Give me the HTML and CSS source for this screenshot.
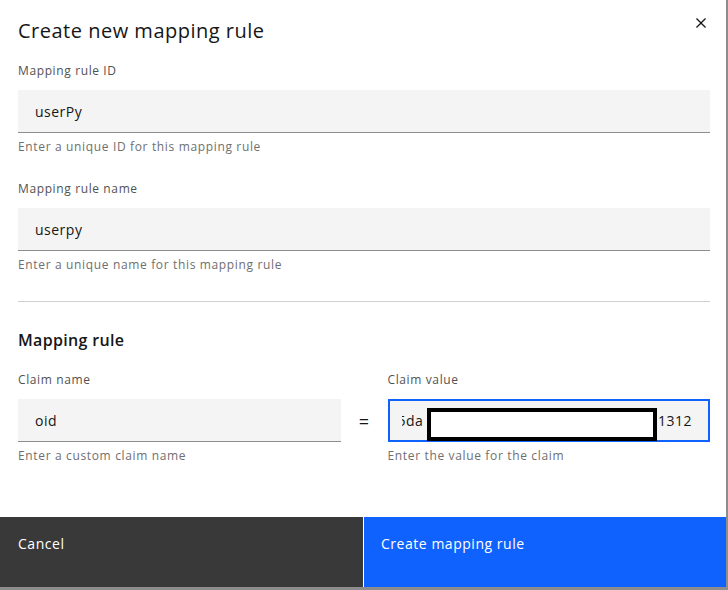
FILE: index.html
```html
<!DOCTYPE html>
<html lang="en">
<head>
<meta charset="utf-8">
<title>Create new mapping rule</title>
<link rel="stylesheet" href="styles.css">
</head>
<body>
<div class="modal">
  <div class="modal-body">
    <div class="header">
      <h2 class="title">Create new mapping rule</h2>
      <button class="close" aria-label="Close">
        <svg width="20" height="20" viewBox="0 0 20 20"><path d="M15 5.9L14.1 5 10 9.1 5.9 5 5 5.9 9.1 10 5 14.1 5.9 15 10 10.9 14.1 15 15 14.1 10.9 10z" fill="#161616"/></svg>
      </button>
    </div>

    <div class="field first">
      <label class="label">Mapping rule ID</label>
      <div class="input"><span>userPy</span></div>
      <div class="helper">Enter a unique ID for this mapping rule</div>
    </div>

    <div class="field second">
      <label class="label">Mapping rule name</label>
      <div class="input"><span>userpy</span></div>
      <div class="helper">Enter a unique name for this mapping rule</div>
    </div>

    <hr class="divider">

    <h3 class="section-title">Mapping rule</h3>

    <div class="claim-row">
      <div class="field">
        <label class="label">Claim name</label>
        <div class="input"><span>oid</span></div>
        <div class="helper">Enter a custom claim name</div>
      </div>
      <div class="equals">=</div>
      <div class="field">
        <label class="label">Claim value</label>
        <div class="input focused">
          <div class="value-clip"><span class="value-start">5da</span></div>
          <span class="value-end">1312</span>
          <div class="redact"></div>
        </div>
        <div class="helper">Enter the value for the claim</div>
      </div>
    </div>
  </div>

  <div class="footer">
    <button class="btn secondary">Cancel</button>
    <button class="btn primary">Create mapping rule</button>
  </div>
</div>
</body>
</html>
```

FILE: styles.css
```css
* { box-sizing: border-box; }

body {
  margin: 0;
  background: #8d8d8d;
  font-family: "Open Sans", "Noto Sans", Arial, sans-serif;
  color: #161616;
}

.modal {
  width: 726px;
  height: 587px;
  background: #ffffff;
  display: flex;
  flex-direction: column;
}

.modal-body {
  flex: 1;
  padding: 17px 16px 0 18px;
}

.header {
  display: flex;
  justify-content: space-between;
  align-items: flex-start;
}

.title {
  margin: 0;
  font-size: 20px;
  font-weight: 400;
  line-height: 28px;
  letter-spacing: 0.5px;
  color: #161616;
}

.close {
  border: 0;
  background: none;
  padding: 0;
  margin: -4px -1px 0 0;
  width: 20px;
  height: 20px;
  cursor: pointer;
}
.close svg { display: block; }

.field.first { margin-top: 18px; }
.field.second { margin-top: 26px; }

.label {
  display: block;
  font-size: 12px;
  line-height: 16px;
  letter-spacing: 0.62px;
  color: #525252;
  margin-bottom: 11px;
}

.input {
  position: relative;
  height: 43px;
  background: #f4f4f4;
  border-bottom: 1px solid #8d8d8d;
  display: flex;
  align-items: center;
  padding: 2px 16px 0 17px;
  font-size: 14px;
  line-height: 18px;
  letter-spacing: 0.5px;
  color: #161616;
}

.helper {
  margin-top: 6px;
  font-size: 12px;
  line-height: 16px;
  letter-spacing: 0.65px;
  color: #6f6f6f;
}

.divider {
  margin: 28px 0 0 0;
  border: 0;
  border-top: 1px solid #d1d1d1;
  height: 0;
}

.section-title {
  margin: 27px 0 0 0;
  font-size: 16px;
  font-weight: 600;
  line-height: 22px;
  letter-spacing: 0.33px;
  color: #161616;
}

.claim-row {
  margin-top: 21px;
  display: grid;
  grid-template-columns: 1fr 47px 1fr;
}

.equals {
  align-self: start;
  margin-top: 27px;
  height: 43px;
  display: flex;
  align-items: center;
  justify-content: center;
  font-size: 18px;
  color: #161616;
}

.input.focused {
  outline: 2px solid #0f62fe;
  outline-offset: -2px;
  border-bottom-color: transparent;
  padding: 2px 18px 0 14px;
  justify-content: space-between;
}

.value-clip {
  overflow: hidden;
}
.value-start {
  display: block;
  margin-left: -4px;
  white-space: nowrap;
}

.redact {
  position: absolute;
  left: 39px;
  top: 9px;
  width: 230px;
  height: 33px;
  background: #ffffff;
  border: 4px solid #000000;
}

.footer {
  display: flex;
  gap: 1px;
  height: 70px;
  background: #ffffff;
}

.btn {
  border: 0;
  margin: 0;
  font-family: inherit;
  font-size: 14px;
  line-height: 18px;
  letter-spacing: 0.53px;
  color: #ffffff;
  text-align: left;
  display: flex;
  align-items: flex-start;
  padding: 18px 16px 0 18px;
  cursor: pointer;
}

.btn.secondary {
  width: 363px;
  background: #393939;
}

.btn.primary {
  flex: 1;
  background: #0f62fe;
  padding-left: 17px;
}
```
